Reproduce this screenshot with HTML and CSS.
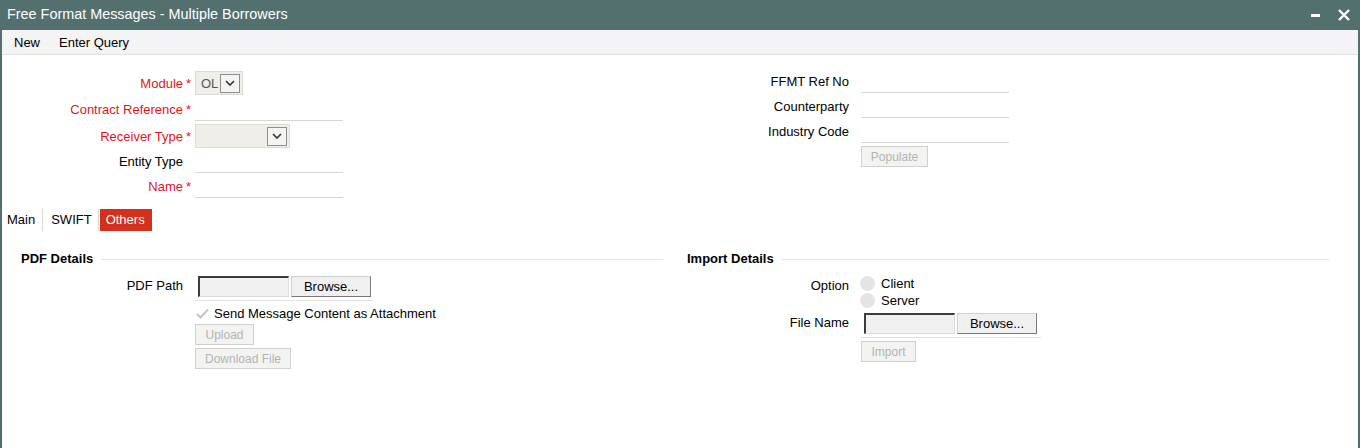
FILE: index.html
```html
<!DOCTYPE html>
<html>
<head>
<meta charset="utf-8">
<link rel="stylesheet" href="styles.css">
</head>
<body>
<div class="window">
  <div class="titlebar">
    <span class="title">Free Format Messages - Multiple Borrowers</span>
    <div class="winbtns">
      <svg class="wbtn" width="12" height="12" viewBox="0 0 12 12"><rect x="1" y="5" width="9" height="3" fill="#fff"/></svg>
      <svg class="wbtn" width="14" height="14" viewBox="0 0 14 14"><path d="M2 2 L12 12 M12 2 L2 12" stroke="#fff" stroke-width="2.4"/></svg>
    </div>
  </div>
  <div class="toolbar">
    <span class="tool">New</span>
    <span class="tool">Enter Query</span>
  </div>

  <div class="header">
    <div class="col">
      <div class="row r1">
        <label class="lbl req">Module</label><span class="star">*</span>
        <div class="select sel-small"><span class="selval">OL</span><span class="drop"><svg width="10" height="6" viewBox="0 0 10 6"><path d="M1 1 L5 5 L9 1" fill="none" stroke="#333" stroke-width="1.6"/></svg></span></div>
      </div>
      <div class="row r2">
        <label class="lbl req">Contract Reference</label><span class="star">*</span>
        <div class="uline"></div>
      </div>
      <div class="row r3">
        <label class="lbl req">Receiver Type</label><span class="star">*</span>
        <div class="select sel-wide"><span class="selval"></span><span class="drop"><svg width="10" height="6" viewBox="0 0 10 6"><path d="M1 1 L5 5 L9 1" fill="none" stroke="#333" stroke-width="1.6"/></svg></span></div>
      </div>
      <div class="row r4">
        <label class="lbl">Entity Type</label><span class="star"></span>
        <div class="uline"></div>
      </div>
      <div class="row r5">
        <label class="lbl req">Name</label><span class="star">*</span>
        <div class="uline"></div>
      </div>
    </div>
    <div class="col colr">
      <div class="row rr">
        <label class="lbl">FFMT Ref No</label><span class="gap"></span>
        <div class="uline"></div>
      </div>
      <div class="row rr">
        <label class="lbl">Counterparty</label><span class="gap"></span>
        <div class="uline"></div>
      </div>
      <div class="row rr">
        <label class="lbl">Industry Code</label><span class="gap"></span>
        <div class="uline"></div>
      </div>
      <div class="row rbtn">
        <span class="lbl"></span><span class="gap"></span>
        <button class="dbtn populate">Populate</button>
      </div>
    </div>
  </div>

  <div class="tabs">
    <span class="tab">Main</span>
    <span class="tab">SWIFT</span>
    <span class="tab active">Others</span>
  </div>

  <div class="sections">
    <div class="section">
      <div class="sechead"><span class="sectitle">PDF Details</span><span class="secline"></span></div>
      <div class="row frow">
        <label class="lbl">PDF Path</label><span class="gap"></span>
        <div class="filewrap">
          <span class="fileinput"></span><button class="browse">Browse...</button>
        </div>
      </div>
      <div class="row chkrow">
        <span class="lbl"></span><span class="gap"></span>
        <svg class="chk" width="13" height="11" viewBox="0 0 13 11"><path d="M1 6 L4.5 9.5 L12 1.5" fill="none" stroke="#c4c4c4" stroke-width="2"/></svg>
        <span class="chktext">Send Message Content as Attachment</span>
      </div>
      <div class="row brow">
        <span class="lbl"></span><span class="gap"></span>
        <button class="dbtn upload">Upload</button>
      </div>
      <div class="row brow2">
        <span class="lbl"></span><span class="gap"></span>
        <button class="dbtn download">Download File</button>
      </div>
    </div>
    <div class="section">
      <div class="sechead"><span class="sectitle">Import Details</span><span class="secline"></span></div>
      <div class="row optrow">
        <label class="lbl optlbl">Option</label><span class="gap"></span>
        <div class="radios">
          <div class="radio"><span class="rdot"></span><span>Client</span></div>
          <div class="radio"><span class="rdot"></span><span>Server</span></div>
        </div>
      </div>
      <div class="row frow2">
        <label class="lbl">File Name</label><span class="gap"></span>
        <div class="filewrap fw2">
          <span class="fileinput"></span><button class="browse">Browse...</button>
        </div>
      </div>
      <div class="row brow3">
        <span class="lbl"></span><span class="gap"></span>
        <button class="dbtn import">Import</button>
      </div>
    </div>
  </div>
</div>
</body>
</html>
```
FILE: styles.css
```css
* { box-sizing: border-box; }
html, body { margin: 0; padding: 0; }
body {
  width: 1360px;
  height: 448px;
  font-family: "Liberation Sans", Arial, sans-serif;
  font-size: 13px;
  color: #000;
  background: #fff;
  overflow: hidden;
}
.window {
  width: 1360px;
  height: 448px;
  border-left: 2px solid #53706f;
  border-right: 2px solid #53706f;
  position: relative;
}
.titlebar {
  height: 30px;
  background: #53706f;
  margin: 0 -2px;
  display: flex;
  align-items: center;
  justify-content: space-between;
  padding: 0 9px 0 7px;
}
.title {
  color: #fff;
  font-size: 14.4px;
  position: relative;
  top: -1px;
}
.winbtns {
  display: flex;
  align-items: center;
  gap: 15px;
}
.wbtn { display: block; }
.toolbar {
  height: 25px;
  background: #f4f4f6;
  border-bottom: 1px solid #e3e3e6;
  display: flex;
  align-items: center;
  padding-left: 12px;
  gap: 19px;
}
.tool { font-size: 13px; }

.header {
  display: flex;
  padding-left: 12px;
}
.col { width: 666px; }
.col:first-child { padding-top: 16px; }
.colr { padding-top: 14px; }
.row {
  display: flex;
  align-items: center;
}
.lbl {
  width: 169px;
  text-align: right;
  flex: none;
}
.req { color: #e5141b; }
.star {
  width: 12px;
  color: #e5141b;
  padding-left: 3px;
  flex: none;
}
.gap { width: 12px; flex: none; }
.r1 { height: 24px; }
.r2 { height: 24px; margin-top: 2px; }
.r3 { height: 24px; margin-top: 3px; }
.r4 { height: 24px; margin-top: 1px; }
.r5 { height: 24px; margin-top: 1px; }
.rr { height: 24px; margin-bottom: 1px; }
.rbtn { margin-top: 3px; }
.uline {
  width: 148px;
  height: 24px;
  border-bottom: 1px solid #d6d6d6;
  align-self: stretch;
}
.select {
  height: 24px;
  background: #efeee9;
  border: 1px solid #dcdbd6;
  display: flex;
  align-items: center;
  justify-content: space-between;
  padding: 0 2px 0 5px;
  color: #555;
  font-size: 13px;
}
.sel-small { width: 48px; }
.sel-wide { width: 95px; }
.drop {
  width: 20px;
  height: 19px;
  border: 1px solid #8e8e8e;
  background: #f4f4f2;
  display: flex;
  align-items: center;
  justify-content: center;
}
.dbtn {
  font-family: "Liberation Sans", Arial, sans-serif;
  font-size: 12px;
  color: #b3b3b3;
  background: #f3f3f1;
  border: 1px solid #d0d0cc;
  height: 21px;
  padding: 0 9px;
  margin: 0;
}
.populate { width: 67px; padding: 0; }

.tabs {
  display: flex;
  align-items: center;
  margin-top: 11px;
  padding-left: 5px;
  height: 22px;
}
.tab {
  height: 22px;
  line-height: 22px;
  padding: 0 6px 0 8px;
  border-right: 1px solid #d8d8d8;
}
.tab:first-child { padding-left: 0; padding-right: 7px; }
.tab.active {
  background: #d3301d;
  color: #fff;
  border-right: none;
  margin-left: 1px;
  padding: 0 7px 0 6px;
}

.sections {
  display: flex;
  padding-left: 12px;
  margin-top: 19px;
  gap: 17px;
}
.section { width: 649px; }
.sechead {
  display: flex;
  align-items: center;
  padding-left: 7px;
  height: 16px;
}
.sectitle { font-weight: bold; font-size: 13px; }
.secline {
  flex: 1;
  height: 1px;
  background: #e6e6e6;
  margin-left: 8px;
  margin-top: 2px;
}
.frow {
  margin-top: 10px;
  align-items: flex-start;
}
.frow .lbl, .frow2 .lbl { padding-top: 2px; }
.filewrap {
  display: flex;
  width: 178px;
  padding: 0 0 3px 3px;
  border-bottom: 1px solid #e2e2e2;
}
.fileinput {
  width: 91px;
  height: 21px;
  background: #f0f0f0;
  border-top: 2px solid #3c3c3c;
  border-left: 2px solid #3c3c3c;
  border-right: 1px solid #dcdcdc;
  border-bottom: 1px solid #dcdcdc;
}
.browse {
  font-family: "Liberation Sans", Arial, sans-serif;
  font-size: 13px;
  color: #000;
  width: 80px;
  height: 21px;
  margin: 0 0 0 2px;
  padding: 0;
  background: #f0f0f0;
  border: 1px solid #7a7a7a;
  border-top-color: #d0d0d0;
  border-left-color: #d0d0d0;
}
.chkrow { height: 17px; margin-top: 4px; }
.chk { margin-left: 1px; margin-right: 5px; }
.chktext { font-size: 13px; }
.brow { margin-top: 2px; }
.brow2 { margin-top: 3px; }
.upload { width: 59px; padding: 0; }
.download { width: 96px; padding: 0; }

.optrow { margin-top: 9px; align-items: flex-start; }
.optlbl { padding-top: 3px; }
.radios { display: flex; flex-direction: column; margin-left: -1px; }
.radio {
  display: flex;
  align-items: center;
  height: 17px;
  gap: 6px;
}
.rdot {
  width: 15px;
  height: 15px;
  border-radius: 50%;
  background: #e4e4e4;
  display: inline-block;
}
.frow2 { margin-top: 4px; align-items: flex-start; }
.fw2 { width: 180px; }
.brow3 { margin-top: 3px; }
.import { width: 55px; padding: 0; }
```
